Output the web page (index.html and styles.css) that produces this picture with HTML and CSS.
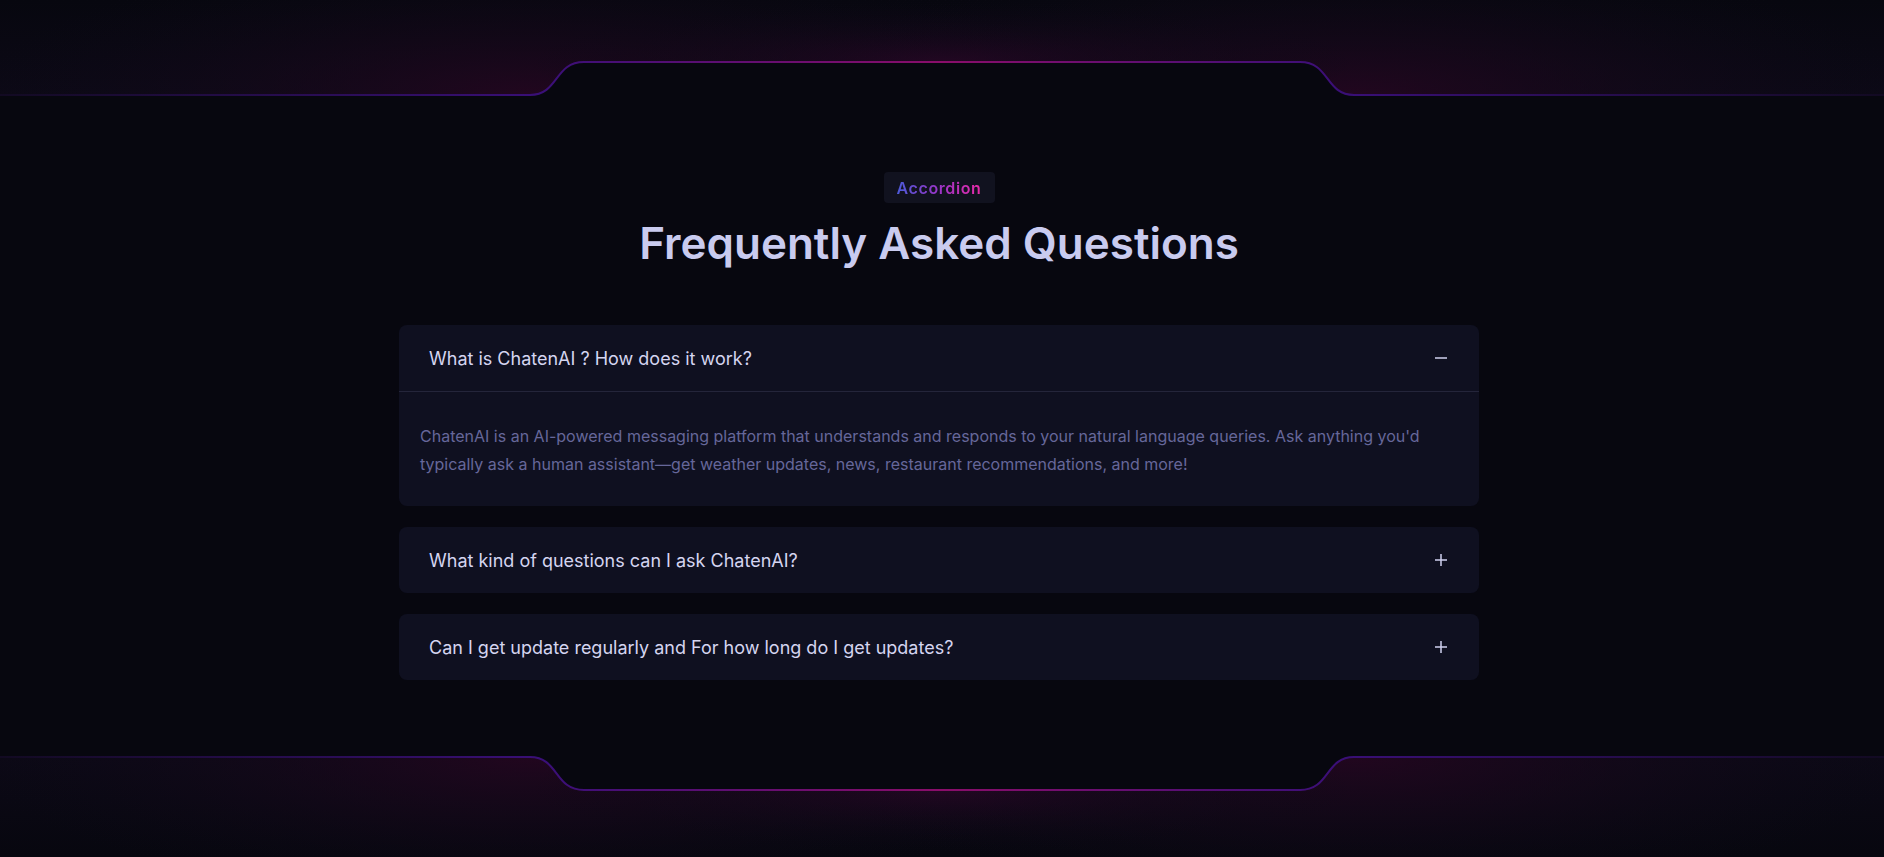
FILE: index.html
```html
<!DOCTYPE html>
<html lang="en">
<head>
<meta charset="utf-8">
<title>FAQ</title>
<link rel="stylesheet" href="styles.css">
</head>
<body>
<section class="page">
  <svg class="deco deco-top" viewBox="0 0 1884 100" preserveAspectRatio="none" aria-hidden="true">
    <defs>
      <linearGradient id="lineTop" x1="0" y1="0" x2="1884" y2="0" gradientUnits="userSpaceOnUse">
        <stop offset="0" stop-color="#120a22"/>
        <stop offset="0.29" stop-color="#3a0f78"/>
        <stop offset="0.5" stop-color="#8a0d6a"/>
        <stop offset="0.71" stop-color="#3a0f78"/>
        <stop offset="1" stop-color="#120a22"/>
      </linearGradient>
      <radialGradient id="glowTopL" cx="530" cy="95" r="560" gradientUnits="userSpaceOnUse" gradientTransform="translate(530 95) scale(1 0.25) translate(-530 -95)">
        <stop offset="0" stop-color="#250620" stop-opacity="0.85"/>
        <stop offset="1" stop-color="#0c0a18" stop-opacity="0"/>
      </radialGradient>
      <radialGradient id="glowTopR" cx="1354" cy="95" r="560" gradientUnits="userSpaceOnUse" gradientTransform="translate(1354 95) scale(1 0.25) translate(-1354 -95)">
        <stop offset="0" stop-color="#250620" stop-opacity="0.85"/>
        <stop offset="1" stop-color="#0c0a18" stop-opacity="0"/>
      </radialGradient>
      <radialGradient id="glowTopC" cx="942" cy="62" r="420" gradientUnits="userSpaceOnUse" gradientTransform="translate(942 62) scale(1 0.15) translate(-942 -62)">
        <stop offset="0" stop-color="#30062a" stop-opacity="0.6"/>
        <stop offset="1" stop-color="#0a0814" stop-opacity="0"/>
      </radialGradient>
      <linearGradient id="fadeTop" x1="0" y1="0" x2="0" y2="95" gradientUnits="userSpaceOnUse">
        <stop offset="0" stop-color="#07070f"/>
        <stop offset="1" stop-color="#0c0916"/>
      </linearGradient>
    </defs>
    <path d="M0 0 H1884 V95 H1354 C1325 95 1330 62 1300 62 H584 C554 62 559 95 530 95 H0 Z" fill="url(#fadeTop)"/>
    <path d="M0 0 H1884 V95 H1354 C1325 95 1330 62 1300 62 H584 C554 62 559 95 530 95 H0 Z" fill="url(#glowTopL)"/>
    <path d="M0 0 H1884 V95 H1354 C1325 95 1330 62 1300 62 H584 C554 62 559 95 530 95 H0 Z" fill="url(#glowTopR)"/>
    <path d="M0 0 H1884 V95 H1354 C1325 95 1330 62 1300 62 H584 C554 62 559 95 530 95 H0 Z" fill="url(#glowTopC)"/>
    <path d="M0 95 H530 C559 95 554 62 584 62 H1300 C1330 62 1325 95 1354 95 H1884" fill="none" stroke="url(#lineTop)" stroke-width="2"/>
  </svg>

  <div class="content">
    <span class="badge"><span class="badge-text">Accordion</span></span>
    <h1 class="title">Frequently Asked Questions</h1>

    <div class="faq">
      <div class="item open">
        <div class="question">
          <span class="q-text">What is ChatenAI ? How does it work?</span>
          <svg class="icon" viewBox="0 0 12 12" aria-hidden="true"><path d="M0 6 H12" /></svg>
        </div>
        <div class="answer">ChatenAI is an AI-powered messaging platform that understands and responds to your natural language queries. Ask anything you'd typically ask a human assistant—get weather updates, news, restaurant recommendations, and more!</div>
      </div>
      <div class="item">
        <div class="question">
          <span class="q-text">What kind of questions can I ask ChatenAI?</span>
          <svg class="icon" viewBox="0 0 12 12" aria-hidden="true"><path d="M0 6 H12 M6 0 V12" /></svg>
        </div>
      </div>
      <div class="item">
        <div class="question">
          <span class="q-text">Can I get update regularly and For how long do I get updates?</span>
          <svg class="icon" viewBox="0 0 12 12" aria-hidden="true"><path d="M0 6 H12 M6 0 V12" /></svg>
        </div>
      </div>
    </div>
  </div>

  <svg class="deco deco-bottom" viewBox="0 0 1884 117" preserveAspectRatio="none" aria-hidden="true">
    <defs>
      <linearGradient id="lineBot" x1="0" y1="0" x2="1884" y2="0" gradientUnits="userSpaceOnUse">
        <stop offset="0" stop-color="#120a22"/>
        <stop offset="0.29" stop-color="#3a0f78"/>
        <stop offset="0.5" stop-color="#8a0d6a"/>
        <stop offset="0.71" stop-color="#3a0f78"/>
        <stop offset="1" stop-color="#120a22"/>
      </linearGradient>
      <radialGradient id="glowBotL" cx="530" cy="17" r="560" gradientUnits="userSpaceOnUse" gradientTransform="translate(530 17) scale(1 0.25) translate(-530 -17)">
        <stop offset="0" stop-color="#250620" stop-opacity="0.85"/>
        <stop offset="1" stop-color="#0c0a18" stop-opacity="0"/>
      </radialGradient>
      <radialGradient id="glowBotR" cx="1354" cy="17" r="560" gradientUnits="userSpaceOnUse" gradientTransform="translate(1354 17) scale(1 0.25) translate(-1354 -17)">
        <stop offset="0" stop-color="#250620" stop-opacity="0.85"/>
        <stop offset="1" stop-color="#0c0a18" stop-opacity="0"/>
      </radialGradient>
      <radialGradient id="glowBotC" cx="942" cy="50" r="420" gradientUnits="userSpaceOnUse" gradientTransform="translate(942 50) scale(1 0.15) translate(-942 -50)">
        <stop offset="0" stop-color="#30062a" stop-opacity="0.6"/>
        <stop offset="1" stop-color="#0a0814" stop-opacity="0"/>
      </radialGradient>
      <linearGradient id="fadeBot" x1="0" y1="17" x2="0" y2="117" gradientUnits="userSpaceOnUse">
        <stop offset="0" stop-color="#0c0916"/>
        <stop offset="1" stop-color="#07070f"/>
      </linearGradient>
    </defs>
    <path d="M0 117 H1884 V17 H1354 C1325 17 1330 50 1300 50 H584 C554 50 559 17 530 17 H0 Z" fill="url(#fadeBot)"/>
    <path d="M0 117 H1884 V17 H1354 C1325 17 1330 50 1300 50 H584 C554 50 559 17 530 17 H0 Z" fill="url(#glowBotL)"/>
    <path d="M0 117 H1884 V17 H1354 C1325 17 1330 50 1300 50 H584 C554 50 559 17 530 17 H0 Z" fill="url(#glowBotR)"/>
    <path d="M0 117 H1884 V17 H1354 C1325 17 1330 50 1300 50 H584 C554 50 559 17 530 17 H0 Z" fill="url(#glowBotC)"/>
    <path d="M0 17 H530 C559 17 554 50 584 50 H1300 C1330 50 1325 17 1354 17 H1884" fill="none" stroke="url(#lineBot)" stroke-width="2"/>
  </svg>
</section>
</body>
</html>
```

FILE: styles.css
```css
* {
  box-sizing: border-box;
}

html, body {
  margin: 0;
  padding: 0;
  background: #07070f;
}

body {
  font-family: Inter, "Noto Sans", "Liberation Sans", sans-serif;
  color: #d5d5f0;
}

.page {
  display: flex;
  flex-direction: column;
  min-height: 857px;
}

.deco {
  display: block;
  width: 100%;
}

.deco-top {
  height: 100px;
}

.deco-bottom {
  height: 117px;
  margin-top: auto;
}

.content {
  display: flex;
  flex-direction: column;
  align-items: center;
  padding: 72px 6px 56px 0;
}

.badge {
  display: inline-flex;
  align-items: center;
  justify-content: center;
  width: 111px;
  height: 31px;
  border-radius: 4px;
  background: #11121f;
}

.badge-text {
  font-size: 16px;
  font-weight: 600;
  letter-spacing: 0.6px;
  background: linear-gradient(90deg, #4c5ad8 0%, #9b35c8 50%, #e82aa8 100%);
  -webkit-background-clip: text;
  background-clip: text;
  color: transparent;
}

.title {
  margin: 14px 0 0;
  font-size: 44px;
  line-height: 53px;
  font-weight: 600;
  color: #c9cbef;
  letter-spacing: 0;
}

.faq {
  width: 1080px;
  margin-top: 55px;
  display: flex;
  flex-direction: column;
  gap: 21px;
}

.item {
  background: #0f1020;
  border-radius: 8px;
}

.question {
  height: 66px;
  display: flex;
  align-items: center;
  justify-content: space-between;
  padding: 0 32px 0 30px;
}

.item.open .question {
  height: 67px;
  border-bottom: 1px solid #24253a;
}

.q-text {
  font-size: 18px;
  font-weight: 400;
  color: #d5d5f0;
}

.icon {
  width: 12px;
  height: 12px;
  stroke: #d0d0ee;
  stroke-width: 1.5;
  fill: none;
}

.answer {
  padding: 30px 21px 28px;
  font-size: 16px;
  line-height: 28px;
  color: #66679a;
}
```
